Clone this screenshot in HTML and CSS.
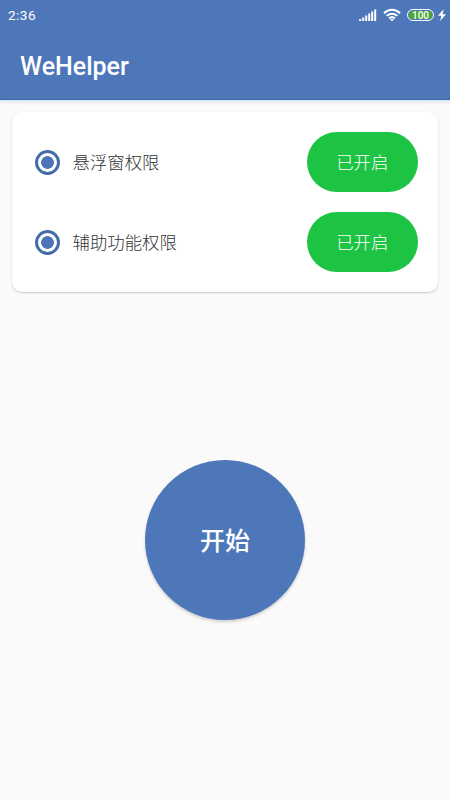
FILE: index.html
```html
<!DOCTYPE html>
<html lang="zh-CN">
<head>
    <meta charset="UTF-8">
    <meta name="viewport" content="width=device-width, initial-scale=1.0">
    <title>WeHelper</title>
    <link rel="stylesheet" href="styles.css">
</head>
<body>
    <header class="header">
        <div class="status-bar">
            <span class="time">2:36</span>
            <div class="status-icons">
                <svg class="signal" width="18" height="12" viewBox="0 0 18 12">
                    <path d="M1.2 12V10M4.2 12V8.5M7.2 12V6.5M10.2 12V4.5M13.2 12V2.5M16.2 12V0.5" stroke="#fff" stroke-width="2"/>
                </svg>
                <svg class="wifi" width="18" height="14" viewBox="0 0 18 14" fill="none" stroke="#fff" stroke-width="2">
                    <path d="M1 5.2C5.6 .6 12.4 .6 17 5.2M3.6 7.9C6.7 4.9 11.3 4.9 14.4 7.9M6.1 10.4C7.8 8.8 10.2 8.8 11.9 10.4"/>
                    <path d="M7.2 11.3Q9 10 10.8 11.3L9 13.4Z" fill="#fff" stroke="none"/>
                </svg>
                <div class="battery"><span class="battery-level">100</span></div>
                <svg class="bolt" width="8" height="12" viewBox="0 0 8 12">
                    <path d="M5.6 0L0 6.7H3.3L2.2 12L8 5.2H4.6Z" fill="#fff"/>
                </svg>
            </div>
        </div>
        <h1>WeHelper</h1>
    </header>

    <main class="container">
        <div class="card">
            <div class="row">
                <span class="radio"></span>
                <span class="label">悬浮窗权限</span>
                <button class="state-button">已开启</button>
            </div>
            <div class="row">
                <span class="radio"></span>
                <span class="label">辅助功能权限</span>
                <button class="state-button">已开启</button>
            </div>
        </div>
        <button class="start-button">开始</button>
    </main>
</body>
</html>
```
FILE: styles.css
```css
* {
    margin: 0;
    padding: 0;
    box-sizing: border-box;
    font-family: Roboto, "Noto Sans CJK SC", sans-serif;
}

body {
    background: #fafafa;
    height: 100vh;
    overflow: hidden;
}

.header {
    height: 100px;
    background: #4e77ba;
    color: white;
    border-bottom: 1px solid #4069aa;
    box-shadow: 0 2px 1px #e1ecfa, 0 3px 4px rgba(0, 0, 0, 0.06);
}

.status-bar {
    height: 30px;
    padding: 0 4px 0 8px;
    display: flex;
    align-items: center;
    justify-content: space-between;
}

.time {
    font-size: 13.5px;
    letter-spacing: 0.5px;
}

.status-icons {
    display: flex;
    align-items: center;
}

.wifi {
    margin-left: 6px;
}

.battery {
    width: 27px;
    height: 12px;
    margin: 0 4px 0 6px;
    padding: 1px;
    border: 1px solid white;
    border-radius: 6px;
}

.battery-level {
    display: block;
    height: 8px;
    border-radius: 4px;
    background: #4aa832;
    font-size: 10px;
    font-weight: 500;
    line-height: 9px;
    text-align: center;
}

h1 {
    padding-left: 20px;
    font-size: 25px;
    font-weight: 500;
    line-height: 73px;
}

.container {
    display: flex;
    flex-direction: column;
    align-items: center;
    padding: 12px;
}

.card {
    width: 100%;
    height: 180px;
    padding: 10px 20.5px 10px 23px;
    background: white;
    border-radius: 10px;
    box-shadow: 0 1px 2px rgba(0, 0, 0, 0.2);
}

.row {
    height: 80px;
    display: flex;
    align-items: center;
}

.radio {
    width: 25px;
    height: 25px;
    border: 3px solid #446cab;
    border-radius: 50%;
    background: radial-gradient(circle, #4a73b8 6px, white 6.7px);
}

.label {
    flex: 1;
    margin-left: 12.5px;
    padding-bottom: 1px;
    font-size: 17.4px;
    font-weight: 300;
    color: #333;
}

.state-button {
    width: 110.5px;
    height: 60px;
    padding-bottom: 1px;
    border: none;
    border-radius: 30px;
    background: #1dc444;
    color: white;
    font-size: 17.4px;
    font-weight: 300;
}

.start-button {
    width: 160px;
    height: 160px;
    margin-top: 168px;
    padding-bottom: 3px;
    border: none;
    border-radius: 50%;
    background: #4e77ba;
    box-shadow: 0 2px 3px rgba(0, 0, 0, 0.17);
    color: white;
    font-size: 25px;
    font-weight: 500;
}
```
